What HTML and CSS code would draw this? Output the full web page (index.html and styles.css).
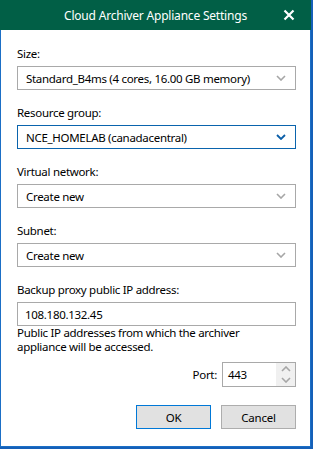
FILE: index.html
```html
<!DOCTYPE html>
<html>
<head>
<meta charset="utf-8">
<link rel="stylesheet" href="styles.css">
</head>
<body>
<div class="window">
  <div class="titlebar">
    <span class="spacer"></span>
    <span class="title">Cloud Archiver Appliance Settings</span>
    <span class="close">
      <svg width="12" height="12" viewBox="0 0 12 12"><path d="M1.5 1.5 L10.5 10.5 M10.5 1.5 L1.5 10.5" stroke="#fff" stroke-width="2.2" fill="none"/></svg>
    </span>
  </div>
  <div class="content">
    <div class="field">
      <label class="label">Size:</label>
      <div class="select">
        <span class="value">Standard_B4ms (4 cores, 16.00 GB memory)</span>
        <svg class="chev" width="10" height="6" viewBox="0 0 10 6"><path d="M1 1 L5 5 L9 1" stroke="#a6a6a6" stroke-width="1.6" fill="none"/></svg>
      </div>
    </div>
    <div class="field">
      <label class="label">Resource group:</label>
      <div class="select focused">
        <span class="value">NCE_HOMELAB (canadacentral)</span>
        <svg class="chev" width="10" height="6" viewBox="0 0 10 6"><path d="M1 1 L5 5 L9 1" stroke="#0a5ea8" stroke-width="1.8" fill="none"/></svg>
      </div>
    </div>
    <div class="field">
      <label class="label">Virtual network:</label>
      <div class="select">
        <span class="value">Create new</span>
        <svg class="chev" width="10" height="6" viewBox="0 0 10 6"><path d="M1 1 L5 5 L9 1" stroke="#a6a6a6" stroke-width="1.6" fill="none"/></svg>
      </div>
    </div>
    <div class="field">
      <label class="label">Subnet:</label>
      <div class="select">
        <span class="value">Create new</span>
        <svg class="chev" width="10" height="6" viewBox="0 0 10 6"><path d="M1 1 L5 5 L9 1" stroke="#a6a6a6" stroke-width="1.6" fill="none"/></svg>
      </div>
    </div>
    <div class="field last">
      <label class="label">Backup proxy public IP address:</label>
      <div class="textbox">108.180.132.45</div>
      <p class="hint">Public IP addresses from which the archiver appliance will be accessed.</p>
    </div>
    <div class="port-row">
      <span class="port-label">Port:</span>
      <div class="spin">
        <span class="spin-value">443</span>
        <div class="spin-btns">
          <svg width="10" height="6" viewBox="0 0 10 6"><path d="M1 5 L5 1 L9 5" stroke="#a6a6a6" stroke-width="1.6" fill="none"/></svg>
          <svg width="10" height="6" viewBox="0 0 10 6"><path d="M1 1 L5 5 L9 1" stroke="#a6a6a6" stroke-width="1.6" fill="none"/></svg>
        </div>
      </div>
    </div>
    <div class="buttons">
      <button class="btn default">OK</button>
      <button class="btn">Cancel</button>
    </div>
  </div>
</div>
</body>
</html>
```

FILE: styles.css
```css
html, body {
  margin: 0;
  padding: 0;
}
body {
  background: #1560b8;
  width: 313px;
  height: 449px;
  overflow: hidden;
  font-family: "Noto Sans", "Open Sans", sans-serif;
  font-size: 11.5px;
  letter-spacing: -0.3px;
  color: #000;
}
.window {
  width: 309px;
  height: 446px;
  background: #fff;
  border: 1px solid #1b6fc6;
  border-top: none;
  display: flex;
  flex-direction: column;
}
.titlebar {
  height: 30px;
  background: #015f46;
  margin: 0 -1px;
  display: grid;
  grid-template-columns: 46px 1fr 46px;
  align-items: center;
  color: #fff;
}
.title {
  text-align: center;
  white-space: nowrap;
  font-size: 12px;
  letter-spacing: -0.2px;
}
.close {
  display: flex;
  justify-content: center;
  align-items: center;
  padding-left: 2px;
}
.content {
  padding: 15px 14px 0 16px;
  display: flex;
  flex-direction: column;
}
.field {
  display: flex;
  flex-direction: column;
  margin-bottom: 14px;
}
.field.last {
  margin-bottom: 8px;
}
.label {
  height: 17px;
  line-height: 17px;
  margin-bottom: 4px;
}
.select, .textbox {
  height: 22px;
  border: 1px solid #a9a9a9;
  display: flex;
  align-items: center;
  padding: 0 9px 0 8px;
}
.select .value {
  flex: 1;
}
.select.focused {
  border-color: #0a64ad;
}
.textbox {
  padding-left: 7px;
}
.hint {
  margin: 0;
  max-width: 255px;
  line-height: 14px;
}
.port-row {
  display: flex;
  justify-content: flex-end;
  align-items: center;
}
.port-label {
  margin-right: 5px;
}
.spin {
  width: 72px;
  height: 23px;
  border: 1px solid #a9a9a9;
  display: flex;
  align-items: center;
}
.spin-value {
  flex: 1;
  padding-left: 5px;
}
.spin-btns {
  width: 19px;
  height: 23px;
  display: flex;
  flex-direction: column;
  justify-content: space-around;
  align-items: center;
  background: #f0f0f0;
  border-left: 1px solid #fff;
}
.buttons {
  display: flex;
  justify-content: flex-end;
  gap: 10px;
  margin-top: 18px;
}
.btn {
  width: 75px;
  height: 24px;
  background: #e1e1e1;
  border: 1px solid #adadad;
  font-family: inherit;
  font-size: 11.5px;
  letter-spacing: -0.2px;
  color: #000;
  padding: 0;
}
.btn.default {
  border-color: #0078d7;
}
```
